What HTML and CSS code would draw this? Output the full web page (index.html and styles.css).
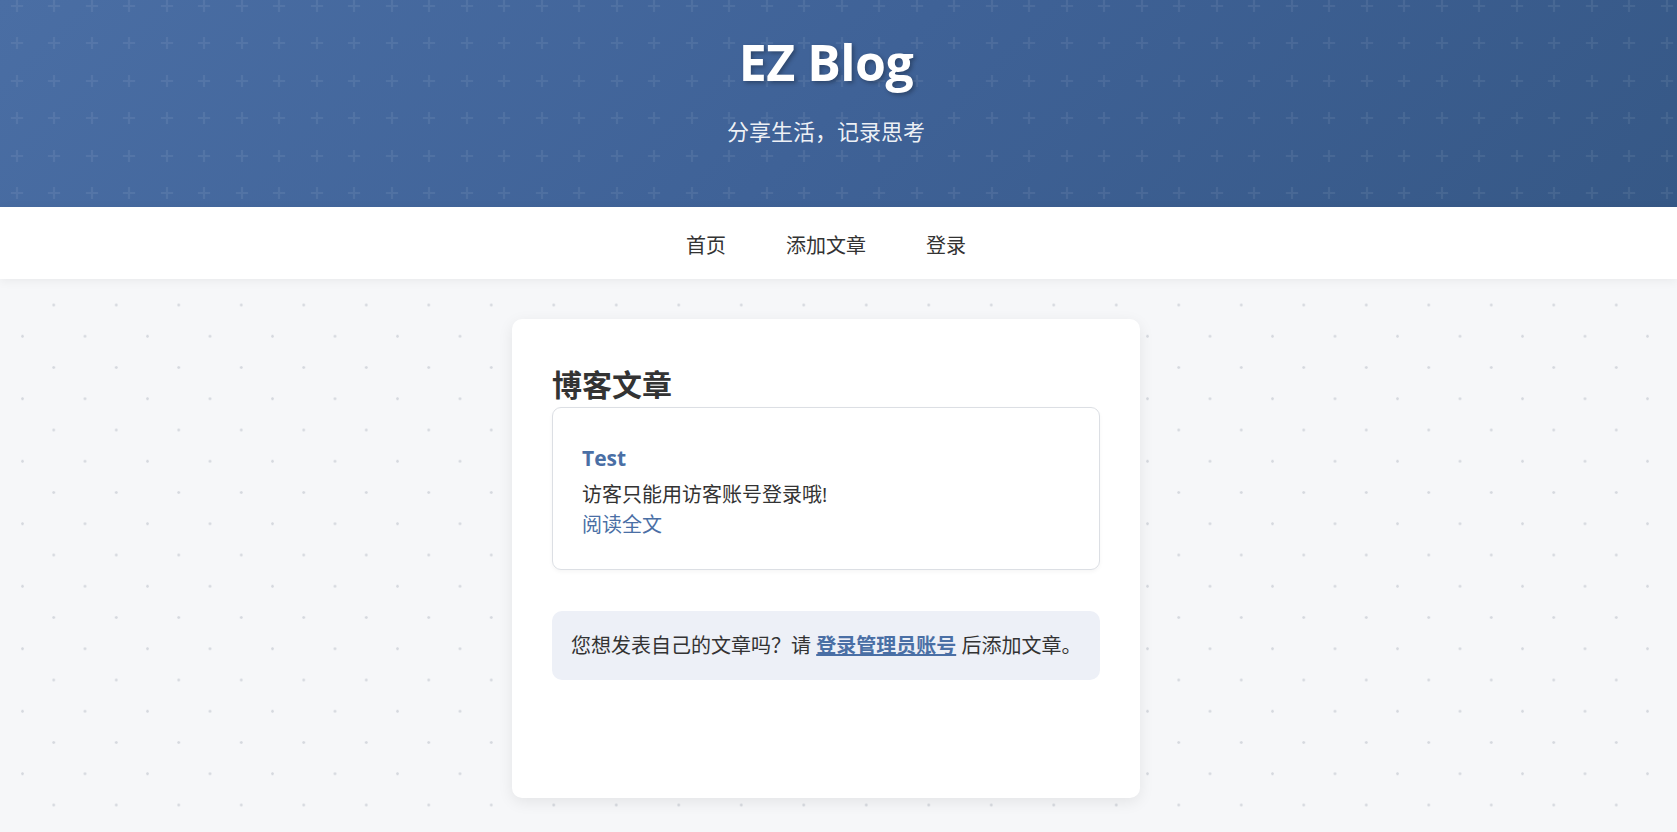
FILE: index.html
```html
<!DOCTYPE html>
<html lang="zh-CN">

<head>
    <meta charset="utf-8">
    <meta name="viewport" content="width=device-width, initial-scale=1">
    <title>EZ Blog</title>
    <link rel="stylesheet" href="styles.css">
</head>

<body>
    <header class="site-header">
        <h1>EZ Blog</h1>
        <p class="tagline">分享生活，记录思考</p>
    </header>

    <nav class="site-nav">
        <a href="#">首页</a>
        <a href="#">添加文章</a>
        <a href="#">登录</a>
    </nav>

    <main class="main">
        <section class="panel">
            <h2>博客文章</h2>

            <article class="post">
                <h3><a href="#">Test</a></h3>
                <p class="post-excerpt">访客只能用访客账号登录哦!</p>
                <a class="read-more" href="#">阅读全文</a>
            </article>

            <div class="notice">
                您想发表自己的文章吗？请 <a href="#">登录管理员账号</a> 后添加文章。
            </div>
        </section>
    </main>
</body>

</html>
```

FILE: styles.css
```css
:root {
    --color-primary: #4a6fa5;
    --color-text: #333333;
    --color-bg: #f6f7f9;
    --color-white: #ffffff;
    --color-border: #dcdfe4;
    --color-notice: #edf0f7;
    --radius-lg: 10px;
    --radius-md: 9px;
    --offset: 25px;
}

* {
    box-sizing: border-box;
}

body {
    margin: 0;
    font-family: "Open Sans", "Noto Sans CJK SC", sans-serif;
    color: var(--color-text);
    background-color: var(--color-bg);
    background-image:
        radial-gradient(circle, #d6d9df 1.1px, transparent 1.6px),
        radial-gradient(circle, #d6d9df 1.1px, transparent 1.6px);
    background-size: 62.5px 62.5px;
    background-position: -8.75px -7.5px, 22.5px 23.75px;
}

a {
    color: var(--color-primary);
    text-decoration: none;
}

/* header */

.site-header {
    height: 207px;
    padding: 31px var(--offset) 0 0;
    text-align: center;
    color: var(--color-white);
    background-color: #41649a;
    background-image:
        url("data:image/svg+xml,%3Csvg xmlns='http://www.w3.org/2000/svg' width='37.5' height='37.5'%3E%3Cpath d='M17.75 12.75h2v5h5v2h-5v5h-2v-5h-5v-2h5z' fill='%23fff' fill-opacity='.07'/%3E%3C/svg%3E"),
        linear-gradient(135deg, #4a6ea4 0%, #3f6297 50%, #365886 100%);
    background-position: -2px -13px, 0 0;
}

.site-header h1 {
    margin: 0;
    font-size: 50px;
    line-height: 62px;
    font-weight: 700;
    letter-spacing: -0.5px;
    text-shadow: 2px 2px 4px rgba(0, 0, 0, 0.3);
}

.tagline {
    margin: 23px 0 0;
    font-size: 22px;
    line-height: 30px;
    color: rgba(255, 255, 255, 0.92);
}

/* nav */

.site-nav {
    height: 72px;
    padding: 6px var(--offset) 0 0;
    display: flex;
    justify-content: center;
    align-items: center;
    gap: 60px;
    background: var(--color-white);
    box-shadow: 0 2px 10px rgba(0, 0, 0, 0.06);
}

.site-nav a {
    font-size: 20px;
    line-height: 28px;
    color: var(--color-text);
}

/* main */

.main {
    padding: 40px var(--offset) 34px 0;
    display: flex;
    justify-content: center;
}

.panel {
    width: 628px;
    min-height: 479px;
    padding: 40px;
    background: var(--color-white);
    border-radius: var(--radius-lg);
    box-shadow: 0 4px 15px rgba(0, 0, 0, 0.08);
}

.panel h2 {
    margin: 0;
    padding-top: 3px;
    font-size: 30px;
    line-height: 45px;
    font-weight: 700;
    color: var(--color-text);
}

.post {
    padding: 30px 29px;
    border: 1px solid var(--color-border);
    border-radius: var(--radius-md);
    box-shadow: 0 2px 4px rgba(0, 0, 0, 0.04);
}

.post h3 {
    margin: 0;
    font-size: 21px;
    line-height: 40px;
    font-weight: 700;
}

.post-excerpt {
    margin: 3px 0 2px;
    font-size: 20px;
    line-height: 28px;
}

.read-more {
    display: block;
    font-size: 20px;
    line-height: 28px;
}

.notice {
    margin-top: 41px;
    padding: 20px 19px;
    font-size: 20px;
    line-height: 29px;
    white-space: nowrap;
    background: var(--color-notice);
    border-radius: var(--radius-lg);
}

.notice a {
    font-weight: 700;
    text-decoration: underline;
}
```
